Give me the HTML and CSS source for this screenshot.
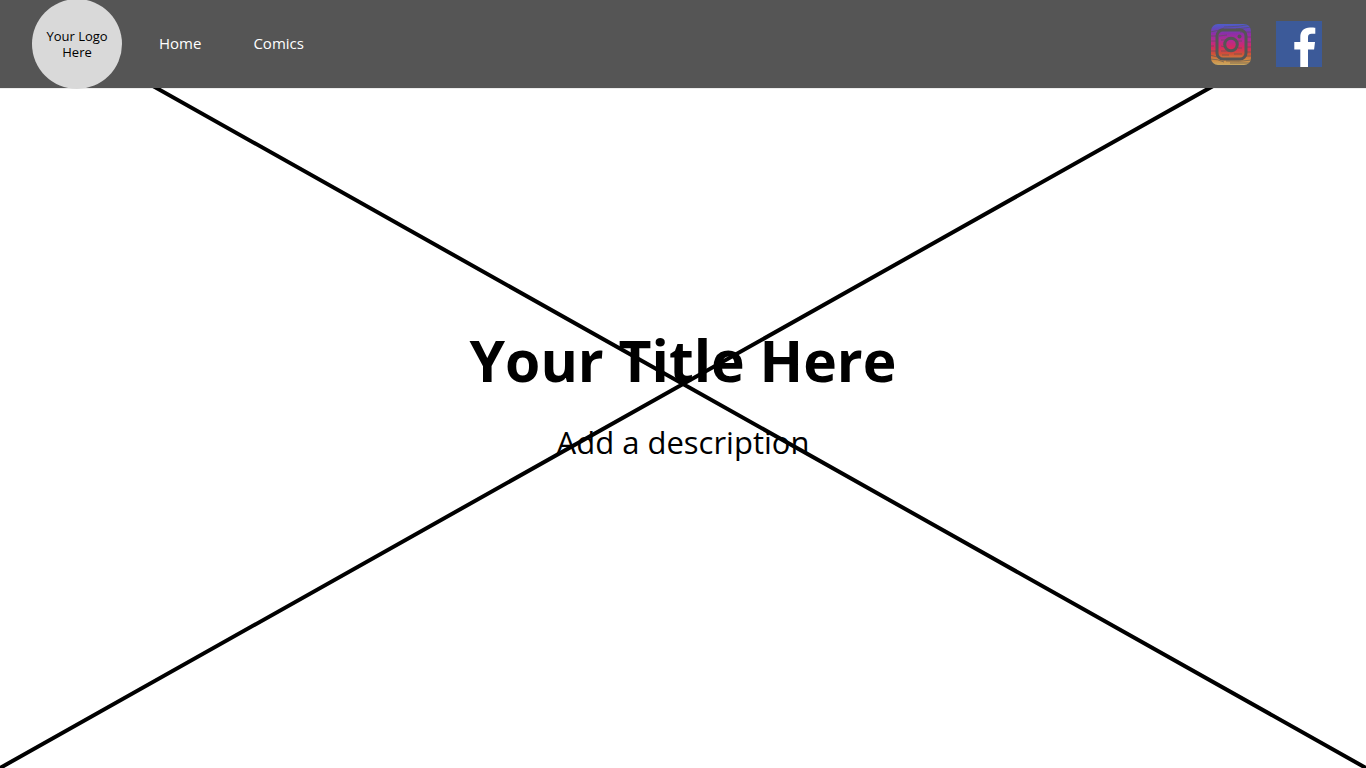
FILE: index.html
```html
<!DOCTYPE html>
<html lang="en">
<head>
<meta charset="utf-8">
<meta name="viewport" content="width=device-width, initial-scale=1">
<title>Your Title Here</title>
<link rel="stylesheet" href="styles.css">
</head>
<body>
<svg class="backdrop" viewBox="0 0 100 100" preserveAspectRatio="none" aria-hidden="true">
  <path d="M0 0L100 100M100 0L0 100"/>
</svg>
<header class="topbar">
  <a class="logo" href="#">Your Logo Here</a>
  <nav class="nav">
    <a href="#">Home</a>
    <a href="#comics">Comics</a>
  </nav>
  <div class="social">
    <a class="instagram" href="#instagram" aria-label="Instagram">
      <svg viewBox="0 0 42 42" width="42" height="42">
        <defs>
          <linearGradient id="sunset" x1="0" y1="0" x2="0" y2="1">
            <stop offset="0" stop-color="#4a62cc"/>
            <stop offset=".12" stop-color="#5f4bbd"/>
            <stop offset=".25" stop-color="#8c2fa8"/>
            <stop offset=".42" stop-color="#b52a92"/>
            <stop offset=".58" stop-color="#d42a62"/>
            <stop offset=".74" stop-color="#cf5236"/>
            <stop offset=".88" stop-color="#d08a42"/>
            <stop offset="1" stop-color="#c9a862"/>
          </linearGradient>
          <clipPath id="tile"><rect x="1" y="1" width="40" height="41" rx="7"/></clipPath>
        </defs>
        <g clip-path="url(#tile)">
          <rect width="42" height="42" fill="url(#sunset)"/>
          <g fill="none" stroke="#555" stroke-opacity=".6" stroke-width="1">
            <path d="M14 4Q28 4 42 1M26 6L42 4M0 9Q8 8 14 5M30 9h12M0 13h7M35 14h7M9 13l8-1M0 18h6M11 17h6M27 18h5M36 19h6M0 23h4M11 23l4 1M28 25h4M36 24h6M0 28h6M11 28h8M36 29h6M0 32l7 2M12 32h7M24 31h8M35 33h7M0 36q8 0 14 3M16 38q14 1 26-1M20 40h22"/>
          </g>
        </g>
        <g fill="none" stroke="#555" stroke-width="3">
          <rect x="7" y="7" width="29" height="29" rx="6"/>
          <circle cx="21" cy="21.500" r="6.300"/>
        </g>
        <circle cx="29.500" cy="13.500" r="2" fill="#555"/>
      </svg>
    </a>
    <a class="facebook" href="#facebook" aria-label="Facebook">
      <svg viewBox="0 0 46 46" width="46" height="46">
        <path fill="#3c5a99" d="M0 0h46v46H0z"/>
        <path fill="#fff" d="M24.300 46V28.500h-6v-7.500h6v-4.700C24.300 10 28 6.500 34 6.500c2.400 0 4.400.1 5.300.3v6h-3.500c-3 0-3.800 1.400-3.800 3.600v4.600h7l-.9 7.500H32V46z"/>
      </svg>
    </a>
  </div>
</header>
<main class="hero">
  <h1>Your Title Here</h1>
  <p>Add a description</p>
</main>
</body>
</html>
```
FILE: styles.css
```css
* {
  box-sizing: border-box;
}

body {
  position: relative;
  display: flex;
  flex-direction: column;
  min-height: 100vh;
  margin: 0;
  background: #fff;
  color: #000;
  font-family: "Open Sans", "Noto Sans", sans-serif;
}

a {
  color: inherit;
  text-decoration: none;
}

svg {
  display: block;
}

.backdrop {
  position: absolute;
  inset: 0;
  z-index: -1;
  width: 100%;
  height: 100%;
  fill: none;
  stroke: #000;
}

.backdrop path {
  stroke-width: 4px;
  vector-effect: non-scaling-stroke;
}

.topbar {
  display: flex;
  align-items: center;
  height: 88px;
  padding: 0 44px 0 32px;
  background: #555;
  box-shadow: 0 1px 0 rgba(0, 0, 0, 0.07);
}

.logo {
  display: flex;
  align-items: center;
  justify-content: center;
  flex: none;
  width: 90px;
  height: 90px;
  padding: 0 12px;
  border-radius: 50%;
  background: #d9d9d9;
  font-size: 13px;
  line-height: 16px;
  text-align: center;
}

.nav {
  display: flex;
  gap: 52px;
  margin-left: 37px;
  padding-bottom: 2px;
  color: #fff;
  font-size: 15px;
  line-height: 20px;
}

.social {
  display: flex;
  align-items: center;
  gap: 24px;
  margin-left: auto;
}

.hero {
  flex: 1;
  padding: 232px 24px 0;
  text-align: center;
}

h1 {
  margin: 0;
  font-size: 57px;
  line-height: 80px;
  font-weight: 700;
}

p {
  margin: 20px 0 0;
  font-size: 31px;
  line-height: 44px;
}
```
